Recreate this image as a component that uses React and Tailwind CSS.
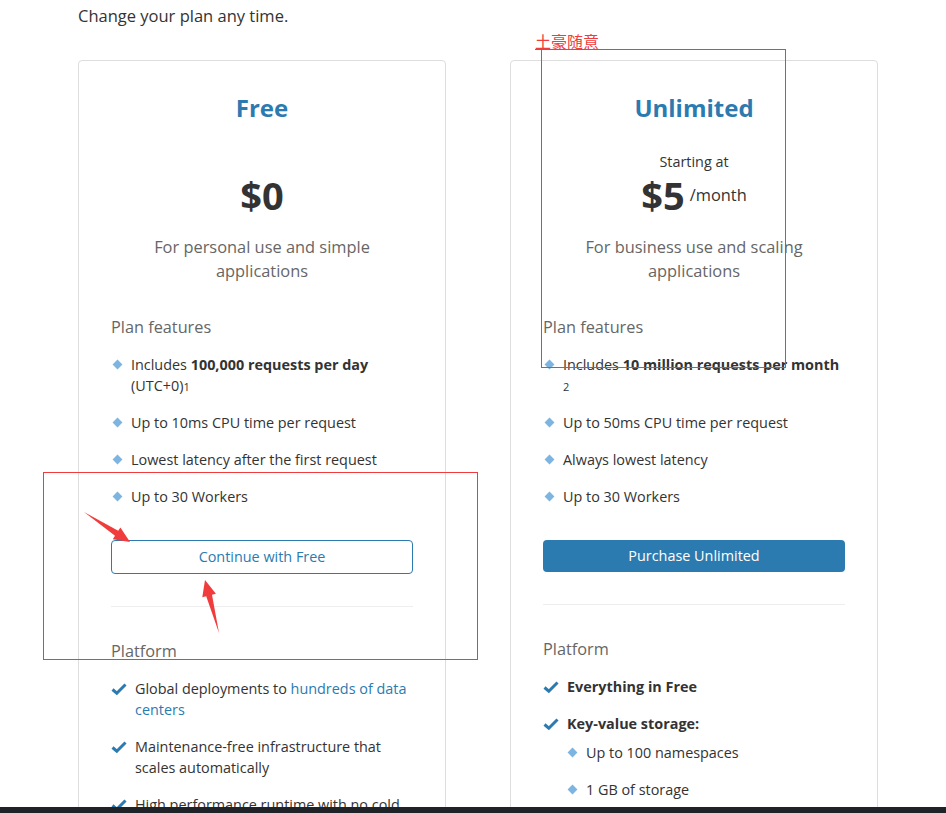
import React from "react";

const BLUE = "#2b7bb0";

const Diamond = () => (
  <span className="mt-[7px] ml-[3px] mr-[10px] block h-[7px] w-[7px] shrink-0 rotate-45 bg-[#7db5e0]" />
);

const Check = () => (
  <svg className="mt-[5px] mr-[8px] shrink-0" width="16" height="12" viewBox="0 0 16 12">
    <path d="M1.5 6.5 L5.8 10.2 L14.5 1.5" fill="none" stroke={BLUE} strokeWidth="3" />
  </svg>
);

const Feature = ({ children }) => (
  <li className="flex text-[14.4px] leading-[21px] text-[#333]">
    <Diamond />
    <div>{children}</div>
  </li>
);

const Platform = ({ children, bold }) => (
  <li className={`flex text-[14.4px] leading-[21px] text-[#333] ${bold ? "font-bold" : ""}`}>
    <Check />
    <div>{children}</div>
  </li>
);

const PlanCard = ({ title, price, starting, desc, features, button, primary, platform }) => (
  <div className="w-[368px] shrink-0 rounded border border-[#ddd] px-[32px] pt-[31px] pb-10">
    <h2 className="text-center text-[24px] font-bold leading-8" style={{ color: BLUE }}>
      {title}
    </h2>
    <div className="mt-[28px] text-center">
      <p className={`text-[14.4px] leading-5 text-[#333] ${starting ? "" : "invisible"}`}>Starting at</p>
      <p className="flex items-center justify-center leading-[46px] text-[#333]">
        <span className="text-[38px] font-bold">{price}</span>
        {starting && <span className="ml-[5px] text-[16.4px]">/month</span>}
      </p>
    </div>
    <p className="mt-[17px] px-8 text-center text-[16.4px] leading-6 text-[#666]">{desc}</p>
    <h3 className="mt-[32px] text-[16.3px] leading-6 text-[#666]">Plan features</h3>
    <ul className="mt-[15px] flex flex-col gap-4">{features}</ul>
    {primary ? (
      <button className="mt-[33px] h-[32px] w-full rounded text-[14.4px] text-white" style={{ background: BLUE }}>
        {button}
      </button>
    ) : (
      <button
        className="mt-[33px] h-[34px] w-full rounded border bg-white text-[14.4px]"
        style={{ borderColor: BLUE, color: BLUE }}
      >
        {button}
      </button>
    )}
    <hr className="mt-[32px] border-t border-[#eee]" />
    <h3 className="mt-[32px] text-[16.3px] leading-6 text-[#666]">Platform</h3>
    <ul className="mt-[15px] flex flex-col gap-4">{platform}</ul>
  </div>
);

export default function App() {
  return (
    <div
      className="relative flex h-[813px] w-[946px] flex-col overflow-hidden bg-white"
      style={{ fontFamily: '"Open Sans", "Noto Sans CJK SC", sans-serif' }}
    >
      <div className="flex-1 overflow-hidden pl-[78px]">
        <p className="pt-1 text-[16.5px] leading-6 text-[#333]">Change your plan any time.</p>
        <div className="mt-8 flex gap-[64px]">
          <PlanCard
            title="Free"
            price="$0"
            desc="For personal use and simple applications"
            button="Continue with Free"
            features={
              <>
                <Feature>
                  Includes <b>100,000 requests per day</b> (UTC+0)
                  <span className="text-[11px] leading-none">1</span>
                </Feature>
                <Feature>Up to 10ms CPU time per request</Feature>
                <Feature>Lowest latency after the first request</Feature>
                <Feature>Up to 30 Workers</Feature>
              </>
            }
            platform={
              <>
                <Platform>
                  Global deployments to <span style={{ color: BLUE }}>hundreds of data centers</span>
                </Platform>
                <Platform>Maintenance-free infrastructure that scales automatically</Platform>
                <Platform>High performance runtime with no cold starts</Platform>
              </>
            }
          />
          <PlanCard
            title="Unlimited"
            price="$5"
            starting
            primary
            desc="For business use and scaling applications"
            button="Purchase Unlimited"
            features={
              <>
                <Feature>
                  Includes <b>10 million requests per month</b>
                  <br />
                  <span className="text-[11px] leading-none">2</span>
                </Feature>
                <Feature>Up to 50ms CPU time per request</Feature>
                <Feature>Always lowest latency</Feature>
                <Feature>Up to 30 Workers</Feature>
              </>
            }
            platform={
              <>
                <Platform bold>Everything in Free</Platform>
                <li>
                  <div className="flex text-[14.4px] font-bold leading-[21px] text-[#333]">
                    <Check />
                    Key-value storage:
                  </div>
                  <ul className="mt-2 ml-[23px] flex flex-col gap-4">
                    <Feature>Up to 100 namespaces</Feature>
                    <Feature>1 GB of storage</Feature>
                  </ul>
                </li>
              </>
            }
          />
        </div>
      </div>
      <div className="h-[6px] shrink-0 bg-[#1f2226]" />

      {/* annotation overlay */}
      <span className="absolute left-[535px] top-[32px] text-[16px] leading-5 text-[#f03c3c]">土豪随意</span>
      <div className="absolute left-[535px] top-[49px] h-px w-[6px] bg-[#f03c3c]" />
      <div className="absolute left-[541px] top-[49px] h-[319px] w-[245px] border border-[#f03c3c]" />
      <div className="absolute left-[43px] top-[472px] h-[188px] w-[435px] border border-[#f03c3c]" />
      <svg className="pointer-events-none absolute left-0 top-0" width="946" height="813">
        <polygon
          fill="#f03c3c"
          points="84,512 118.2,530.8 120.4,527.4 130,542 112.8,539.2 115,535.8"
        />
        <polygon
          fill="#f03c3c"
          points="219,633 212,594.7 215.9,593.7 205,580 202.3,597.3 206.2,596.3"
        />
      </svg>
    </div>
  );
}
